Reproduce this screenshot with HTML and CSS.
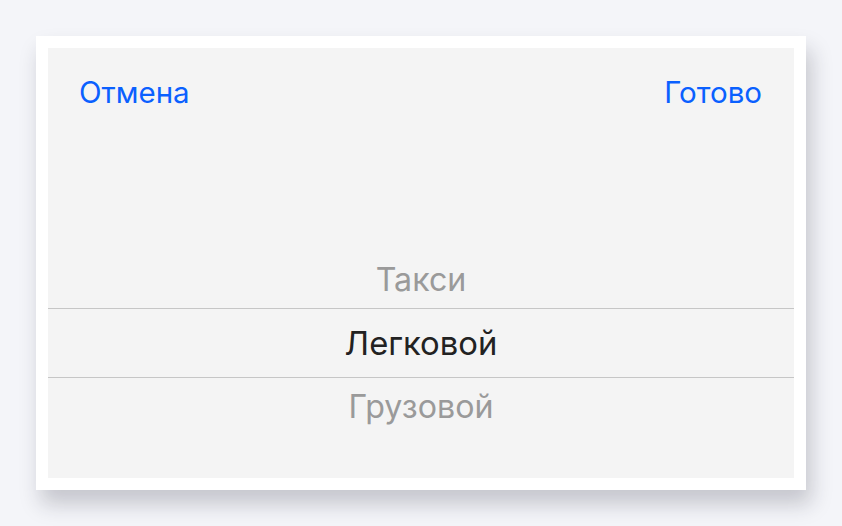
FILE: index.html
```html
<!DOCTYPE html>
<html lang="ru">
<head>
<meta charset="utf-8">
<title>Тип транспорта</title>
<link rel="stylesheet" href="styles.css">
</head>
<body>
  <div class="card">
    <div class="sheet">
      <div class="toolbar">
        <span class="action">Отмена</span>
        <span class="action">Готово</span>
      </div>
      <div class="picker">
        <div class="option option-dim option-above">Такси</div>
        <div class="option option-selected">Легковой</div>
        <div class="option option-dim option-below">Грузовой</div>
      </div>
    </div>
  </div>
</body>
</html>
```

FILE: styles.css
```css
html, body {
  margin: 0;
  padding: 0;
}

body {
  background: #f4f5f9;
  font-family: Inter, "Liberation Sans", sans-serif;
  padding: 36px;
  width: 770px;
}

.card {
  background: #ffffff;
  padding: 12px;
  box-shadow: 5px 14px 20px rgba(30, 34, 50, 0.22);
}

.sheet {
  background: #f4f4f4;
  height: 430px;
  display: flex;
  flex-direction: column;
}

.toolbar {
  display: flex;
  justify-content: space-between;
  align-items: center;
  padding: 0 32px 0 31px;
  height: 88px;
}

.action {
  color: #0a60ff;
  font-size: 29.5px;
}

.picker {
  margin-top: 109px;
  display: flex;
  flex-direction: column;
}

.option {
  text-align: center;
}

.option-dim {
  color: #9a9a9a;
  height: 63px;
  font-size: 32.2px;
}

.option-above {
  box-sizing: border-box;
  padding-top: 6px;
  line-height: 57px;
}

.option-selected {
  color: #222222;
  height: 68px;
  line-height: 68px;
  font-size: 32.8px;
  border-top: 1px solid #c6c6c6;
  border-bottom: 1px solid #c6c6c6;
}

.option-below {
  line-height: 58px;
}
```
